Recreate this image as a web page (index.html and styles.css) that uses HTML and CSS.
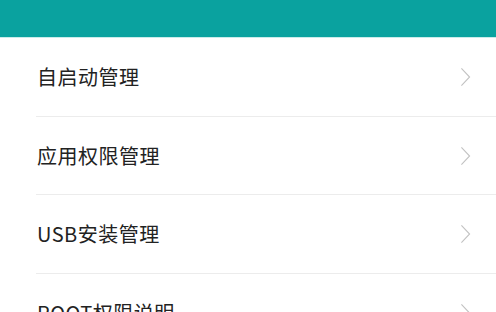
FILE: index.html
```html
<!DOCTYPE html>
<html lang="zh-CN">
<head>
    <meta charset="UTF-8">
    <meta name="viewport" content="width=device-width, initial-scale=1.0">
    <title>权限管理</title>
    <link rel="stylesheet" href="styles.css">
</head>
<body>
    <div class="header"></div>

    <div class="menu">
        <div class="item">
            <span class="label">自启动管理</span>
            <svg class="arrow" viewBox="0 0 12 22"><path d="M1.5 1.5 L10.5 11 L1.5 20.5"/></svg>
        </div>
        <div class="item">
            <span class="label">应用权限管理</span>
            <svg class="arrow" viewBox="0 0 12 22"><path d="M1.5 1.5 L10.5 11 L1.5 20.5"/></svg>
        </div>
        <div class="item">
            <span class="label">USB安装管理</span>
            <svg class="arrow" viewBox="0 0 12 22"><path d="M1.5 1.5 L10.5 11 L1.5 20.5"/></svg>
        </div>
        <div class="item">
            <span class="label">ROOT权限说明</span>
            <svg class="arrow" viewBox="0 0 12 22"><path d="M1.5 1.5 L10.5 11 L1.5 20.5"/></svg>
        </div>
    </div>
</body>
</html>
```

FILE: styles.css
```css
* {
    box-sizing: border-box;
    margin: 0;
    padding: 0;
}

body {
    font-family: 'Noto Sans CJK SC', 'Noto Sans', sans-serif;
    background: #ffffff;
    color: #222222;
    overflow: hidden;
}

.header {
    height: 38px;
    background: #0aa29f;
    border-bottom: 1px solid #c9ecea;
}

.menu {
    padding-left: 36px;
}

.item {
    height: 79px;
    display: flex;
    align-items: center;
    justify-content: space-between;
    padding-left: 1px;
    padding-right: 25px;
    border-bottom: 1px solid #ececec;
}

.item:nth-child(2) {
    height: 78px;
}

.label {
    font-size: 20px;
    line-height: 1;
    letter-spacing: 0.5px;
}

.arrow {
    width: 11px;
    height: 20px;
    fill: none;
    stroke: #c2c2c2;
    stroke-width: 1.2;
}
```
